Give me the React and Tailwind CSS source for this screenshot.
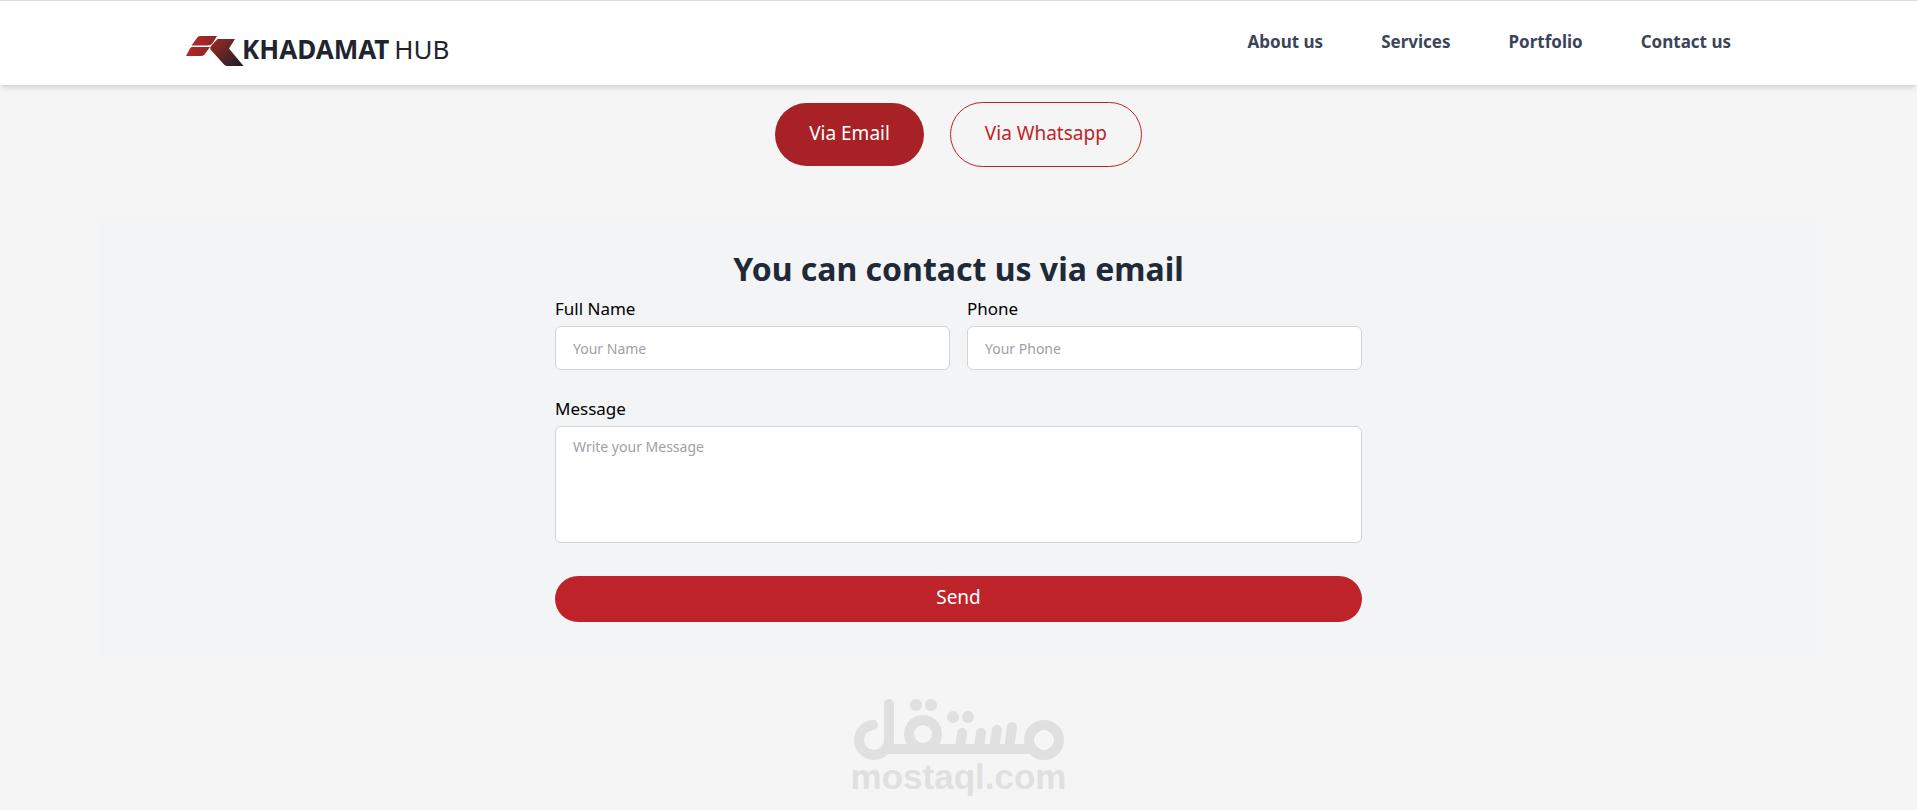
import { useState } from "react";

const NAV_LINKS = [
  { label: "About us", href: "#about" },
  { label: "Services", href: "#services" },
  { label: "Portfolio", href: "#portfolio" },
  { label: "Contact us", href: "#contact" },
];

const FIELD =
  "block w-full rounded-md border border-[#d1d5db] bg-white px-[17px] text-sm text-gray-900 placeholder:text-[#9f9fa6] outline-none focus:border-[#be2329]";

const Logo = () => (
  <a href="#home" className="flex items-center text-[26px] leading-9 text-[#1f2430]">
    <svg className="mt-1" width="56" height="32" viewBox="0 0 56 32" overflow="visible" aria-hidden="true">
      <defs>
        <linearGradient id="logo-red" x1="0" y1="0" x2="1" y2="0">
          <stop offset="0" stopColor="#b8232a" />
          <stop offset="1" stopColor="#8a2a26" />
        </linearGradient>
        <linearGradient id="logo-dark" x1="0.1" y1="0.1" x2="1" y2="0.9">
          <stop offset="0" stopColor="#8f2a25" />
          <stop offset="0.5" stopColor="#5a2526" />
          <stop offset="1" stopColor="#1b1e2c" />
        </linearGradient>
      </defs>
      <path d="M14 1H31L26.500 8.500Q24.500 10.500 22 10.500H5.500L11 3Q12 1 14 1Z" fill="url(#logo-red)" />
      <path d="M5.500 12H24L18.500 19.500Q17 21 15 21H0L4 13.500Z" fill="url(#logo-red)" />
      <path d="M31.500 4H49L43 13.500L57.500 31H41Q39 31 37.500 29L24.500 14.500Q23.500 12.500 25 11Z" fill="url(#logo-dark)" />
    </svg>
    <span className="font-bold">KHADAMAT</span>
    <span className="ml-[5px]">HUB</span>
  </a>
);

const Watermark = () => (
  <div className="flex w-[212px] flex-col items-center text-[#e0e0e0]">
    <svg width="212" height="63" viewBox="0 0 212 63" fill="none" role="img" aria-label="مستقل">
      <g stroke="currentColor" strokeWidth="10" strokeLinecap="round">
        <path d="M20 27A15 15 0 1 0 36 42V6" />
        <path d="M34 51H180" strokeLinecap="butt" />
        <circle cx="70" cy="36" r="14" />
        <circle cx="191" cy="42" r="15" />
        <path d="M109 35L107 50M128 35L126 50M144 32L141 50M159 29L156 50" />
      </g>
      <g fill="currentColor">
        <circle cx="63" cy="7" r="6" />
        <circle cx="78" cy="7" r="6" />
        <circle cx="100" cy="19" r="6" />
        <circle cx="115" cy="19" r="6" />
      </g>
    </svg>
    <span className="font-['Liberation_Sans',sans-serif] text-[35px] leading-8 font-bold">mostaql.com</span>
  </div>
);

export default function App() {
  const [via, setVia] = useState("email");

  const tabClass = (active) =>
    active
      ? "rounded-full bg-[#a72127] px-[34px] pt-[15px] pb-[17px] text-white"
      : "rounded-full border border-[#be2329] px-[34px] pt-[15px] pb-[17px] text-[#be2329]";

  return (
    <div className="min-h-screen bg-[#f5f5f5] font-['Noto_Sans',sans-serif] text-black">
      <header className="border-t border-[#dedede] bg-white shadow-md">
        <div className="flex h-[84px] items-start justify-between px-[186px]">
          <div className="pt-[30px]">
            <Logo />
          </div>
          <nav className="flex gap-[58px] pt-[29px]">
            {NAV_LINKS.map((link) => (
              <a key={link.label} href={link.href} className="text-[17px] leading-6 font-bold text-[#3b4559]">
                {link.label}
              </a>
            ))}
          </nav>
        </div>
      </header>

      <main className="px-[99px] pt-[17px]">
        <div className="flex items-center justify-center gap-[26px] text-[19px] leading-[31px]">
          <button type="button" className={tabClass(via === "email")} onClick={() => setVia("email")}>
            Via Email
          </button>
          <button type="button" className={tabClass(via === "whatsapp")} onClick={() => setVia("whatsapp")}>
            Via Whatsapp
          </button>
        </div>

        <section className="mt-[50px] bg-[#f3f4f6] pt-8 pb-[34px]">
          <form className="mx-auto max-w-[807px]" onSubmit={(e) => e.preventDefault()}>
            <h1 className="text-center text-[32px] leading-10 font-bold text-[#1f2937]">
              You can contact us via {via}
            </h1>
            <div className="mt-2 grid grid-cols-2 gap-[17px]">
              <div>
                <label htmlFor="name" className="block text-[17px] leading-6">
                  Full Name
                </label>
                <input id="name" type="text" placeholder="Your Name" className={`${FIELD} mt-[5px] h-11`} />
              </div>
              <div>
                <label htmlFor="phone" className="block text-[17px] leading-6">
                  Phone
                </label>
                <input id="phone" type="tel" placeholder="Your Phone" className={`${FIELD} mt-[5px] h-11`} />
              </div>
            </div>
            <label htmlFor="message" className="mt-[27px] block text-[17px] leading-6">
              Message
            </label>
            <textarea
              id="message"
              placeholder="Write your Message"
              className={`${FIELD} mt-[5px] h-[117px] resize-none py-2 leading-6`}
            />
            <button
              type="submit"
              className="mt-[33px] block h-[46px] w-full rounded-full bg-[#be2329] pb-1 text-[19px] leading-7 text-white"
            >
              Send
            </button>
          </form>
        </section>

        <div className="mt-[42px] flex justify-center">
          <Watermark />
        </div>
      </main>
    </div>
  );
}
